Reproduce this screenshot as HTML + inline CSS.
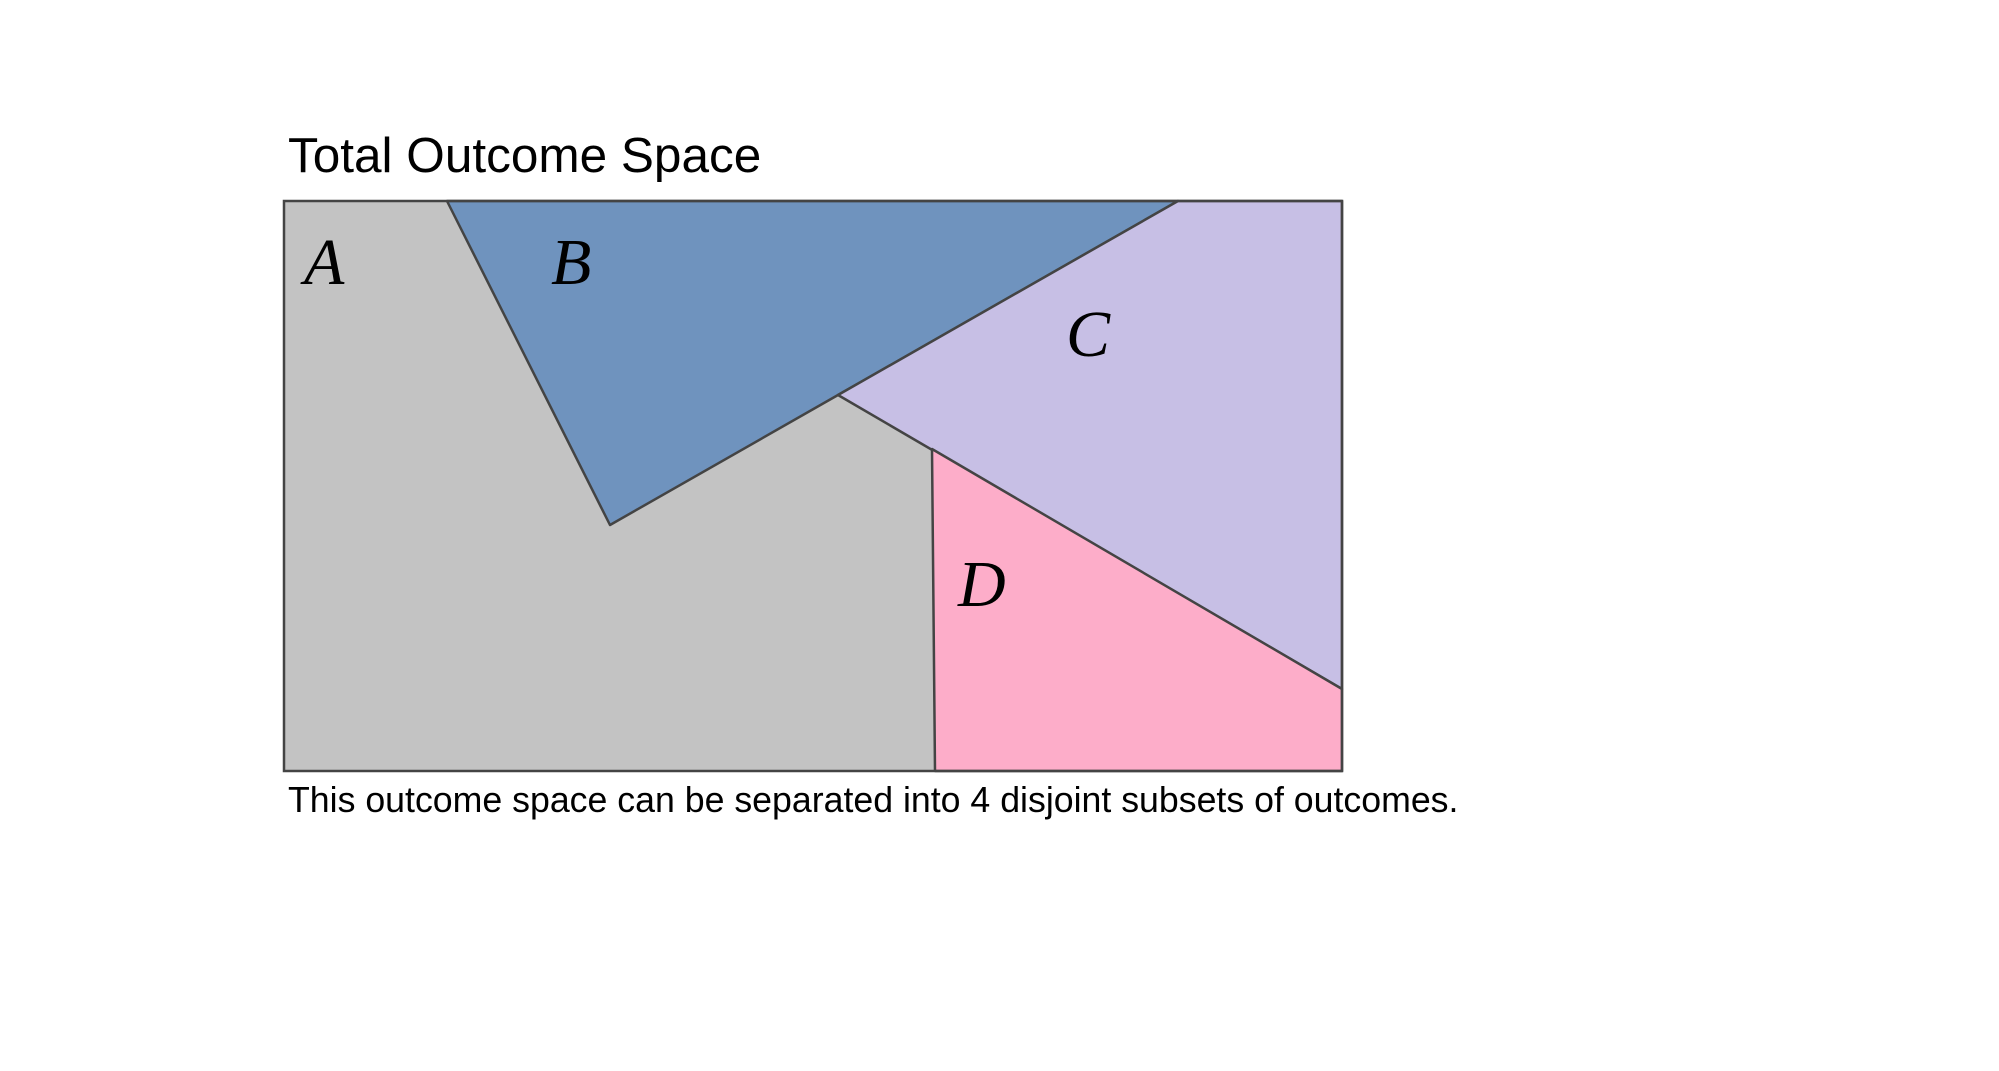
<!DOCTYPE html>
<html><head><style>body{margin:0;background:#fff;width:1999px;height:1066px;overflow:hidden}</style></head><body>
<svg width="1999" height="1066" xmlns="http://www.w3.org/2000/svg">
<rect x="0" y="0" width="1999" height="1066" fill="#fff"/>
<text x="288" y="172" font-family="Liberation Sans, sans-serif" font-size="49.5" fill="#000">Total Outcome Space</text>
<rect x="284" y="201" width="1058" height="570" fill="#c3c3c3"/>
<polygon points="447,201 1178,201 838,395 610,525" fill="#6f93be" stroke="#444" stroke-width="2.5" stroke-linejoin="round"/>
<polygon points="1178,201 1342,201 1342,689 838,395" fill="#c7bfe5" stroke="#444" stroke-width="2.5" stroke-linejoin="round"/>
<polygon points="932,449 1342,689 1342,771 935,771" fill="#fdadc9" stroke="#444" stroke-width="2.5" stroke-linejoin="round"/>
<rect x="284" y="201" width="1058" height="570" fill="none" stroke="#444" stroke-width="2.5"/>
<g font-family="Liberation Serif, serif" font-style="italic" font-size="66" fill="#000">
<text x="304" y="284" transform="scale(1,1)">A</text>
<text x="551" y="284">B</text>
<text x="1066" y="362" transform="translate(0,-6)">C</text>
<text x="958" y="606">D</text>
</g>
<text x="288" y="812" font-family="Liberation Sans, sans-serif" font-size="35.7" fill="#000">This outcome space can be separated into 4 disjoint subsets of outcomes.</text>
</svg>
</body></html>
